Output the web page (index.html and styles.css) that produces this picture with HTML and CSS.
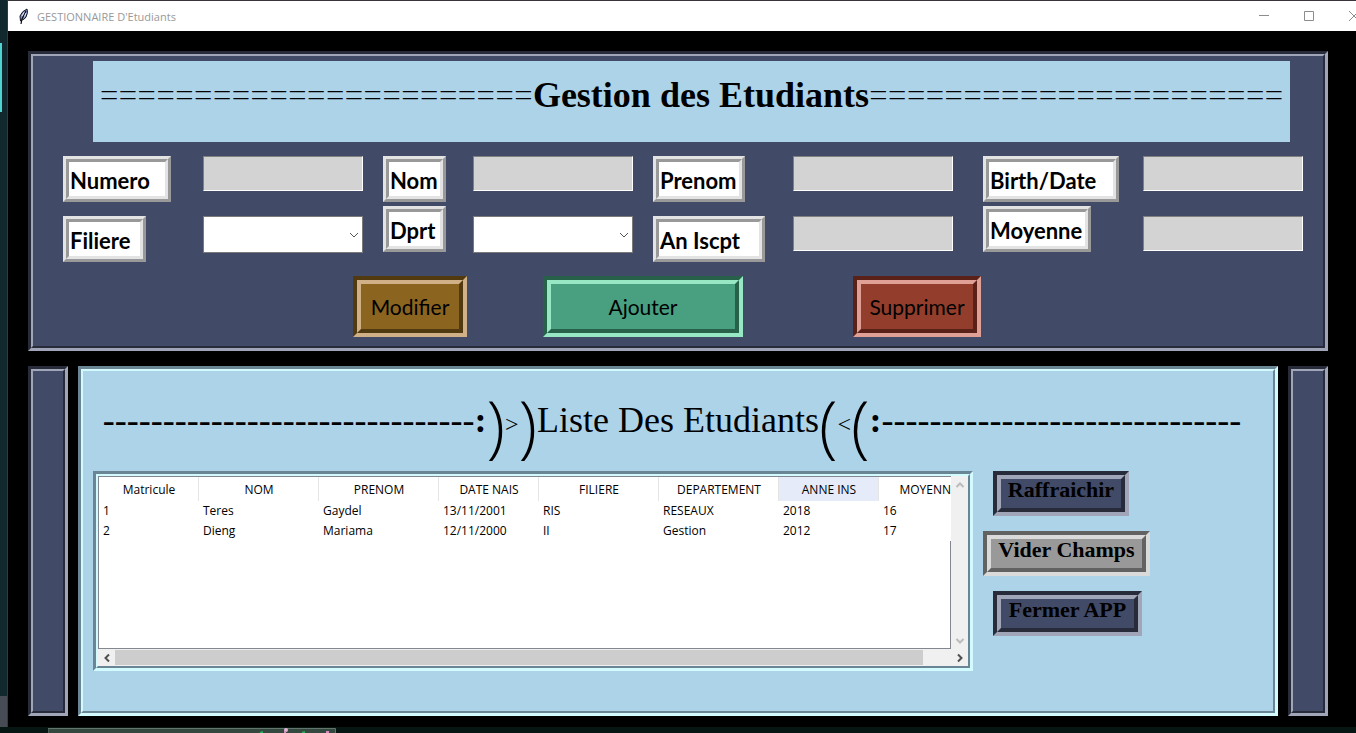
FILE: index.html
```html
<!DOCTYPE html>
<html lang="fr">
<head>
<meta charset="utf-8">
<title>GESTIONNAIRE D'Etudiants</title>
<link rel="stylesheet" href="styles.css">
</head>
<body>
<div class="desktop">
  <aside class="desktop-edge"><span class="edge-accent"></span><span class="edge-foot"></span></aside>
  <div class="window">
    <header class="titlebar">
      <svg class="feather" width="12" height="17" viewBox="0 0 12 17">
        <path d="M2.500 13 L2 8 Q4 3 9 1 Q10.500 4 8 9 Q6.500 11.500 4 12 Z" fill="#8896c6" stroke="#10131f"/>
        <path d="M3 16 L4 11 L8 3" fill="none" stroke="#0b0d16" stroke-width="1.200"/>
        <path d="M4 8 L6 4.500M6.500 8.500L8 5" stroke="#e6ebff" stroke-width="1"/>
      </svg>
      <span class="titlebar-text">GESTIONNAIRE D'Etudiants</span>
      <div class="controls">
        <button aria-label="Réduire"><svg width="12" height="12" viewBox="0 0 12 12"><path d="M1 5.500H11"/></svg></button>
        <button aria-label="Agrandir"><svg width="12" height="12" viewBox="0 0 12 12"><path d="M1.500 1.500H10.500V10.500H1.500Z"/></svg></button>
        <button aria-label="Fermer"><svg width="12" height="12" viewBox="0 0 12 12"><path d="M1 1L11 11M11 1L1 11"/></svg></button>
      </div>
    </header>

    <main class="content">
      <section class="bevel panel form-panel">
        <h1 class="banner"><span class="rule">=======================</span>Gestion des Etudiants<span class="rule">======================</span></h1>

        <form class="fields" id="student">
          <label class="bevel tag w-wide" for="numero">Numero</label>
          <input class="entry" id="numero">
          <label class="bevel tag w-nom" for="nom">Nom</label>
          <input class="entry" id="nom">
          <label class="bevel tag w-prenom" for="prenom">Prenom</label>
          <input class="entry" id="prenom">
          <label class="bevel tag w-birth" for="birth">Birth/Date</label>
          <input class="entry" id="birth">

          <label class="bevel tag w-filiere low" for="filiere">Filiere</label>
          <div class="combo low"><select id="filiere"><option></option><option>RIS</option><option>II</option></select><svg width="10" height="6" viewBox="0 0 10 6"><path d="M1 1L5 5L9 1"/></svg></div>
          <label class="bevel tag w-nom" for="dprt">Dprt</label>
          <div class="combo low"><select id="dprt"><option></option><option>RESEAUX</option><option>Gestion</option></select><svg width="10" height="6" viewBox="0 0 10 6"><path d="M1 1L5 5L9 1"/></svg></div>
          <label class="bevel tag w-annee low" for="annee">An Iscpt</label>
          <input class="entry low" id="annee">
          <label class="bevel tag w-wide" for="moyenne">Moyenne</label>
          <input class="entry low" id="moyenne">
        </form>

        <div class="actions">
          <button class="bevel action edit">Modifier</button>
          <button class="bevel action add">Ajouter</button>
          <button class="bevel action remove">Supprimer</button>
        </div>
      </section>

      <div class="lower">
        <div class="bevel panel side"></div>
        <section class="bevel panel list-panel">
          <h2 class="list-title">-------------------------------<b>:</b><span class="paren">)</span><span class="chev">&gt;</span><span class="paren">)</span>Liste Des Etudiants<span class="paren">(</span><span class="chev">&lt;</span><span class="paren">(</span><b>:</b>------------------------------</h2>
          <div class="list-body">
            <div class="bevel table-frame">
              <div class="viewport">
                <table>
                  <colgroup><col class="c-short"><col class="c-long"><col class="c-long"><col class="c-short"><col class="c-long"><col class="c-long"><col class="c-short"><col></colgroup>
                  <thead><tr><th>Matricule</th><th>NOM</th><th>PRENOM</th><th>DATE NAIS</th><th>FILIERE</th><th>DEPARTEMENT</th><th class="hover">ANNE INS</th><th class="last">MOYENN</th></tr></thead>
                  <tbody>
                    <tr><td>1</td><td>Teres</td><td>Gaydel</td><td>13/11/2001</td><td>RIS</td><td>RESEAUX</td><td>2018</td><td>16</td></tr>
                    <tr><td>2</td><td>Dieng</td><td>Mariama</td><td>12/11/2000</td><td>II</td><td>Gestion</td><td>2012</td><td>17</td></tr>
                  </tbody>
                </table>
                <div class="blank"></div>
              </div>
              <div class="scroll-v">
                <button aria-label="Haut"><svg width="10" height="8" viewBox="0 0 10 8"><path d="M1.500 6L5 2.500L8.500 6"/></svg></button>
                <button aria-label="Bas"><svg width="10" height="8" viewBox="0 0 10 8"><path d="M1.500 2L5 5.500L8.500 2"/></svg></button>
              </div>
              <div class="scroll-h">
                <button aria-label="Gauche"><svg width="8" height="10" viewBox="0 0 8 10"><path d="M6 1.500L2.500 5L6 8.500"/></svg></button>
                <div class="track"><div class="thumb"></div></div>
                <button aria-label="Droite"><svg width="8" height="10" viewBox="0 0 8 10"><path d="M2 1.500L5.500 5L2 8.500"/></svg></button>
              </div>
            </div>
            <div class="tools">
              <button class="bevel tool inset w-refresh">Raffraichir</button>
              <button class="bevel tool gray w-clear">Vider Champs</button>
              <button class="bevel tool inset w-close">Fermer APP</button>
            </div>
          </div>
        </section>
        <div class="bevel panel side"></div>
      </div>
    </main>
  </div>
</div>
<footer class="desktop-foot">
  <svg class="preview" width="288" height="6" viewBox="0 0 288 6">
    <path d="M0 6V1.500H287.500V6" fill="#34483f" stroke="#62756c"/>
    <path d="M212 6L215 5M254 6L257 5" stroke="#22b45b" stroke-width="2"/>
    <circle cx="238" cy="3" r="2" fill="#e5b1d4"/><path d="M237 4V6M278 5H281" stroke="#d58cbd" stroke-width="2"/>
  </svg>
</footer>
</body>
</html>
```
FILE: styles.css
```css
* { box-sizing: border-box; }

body {
  margin: 0;
  min-height: 100vh;
  display: flex;
  flex-direction: column;
  background: #061713;
  color: #000;
  font-family: "Segoe UI", "Open Sans", sans-serif;
  font-size: 12px;
  overflow: hidden;
}

button, input, select { font: inherit; color: inherit; border-radius: 0; margin: 0; }

.desktop { flex: 1; display: flex; }

.desktop-edge {
  width: 8px;
  display: flex;
  flex-direction: column;
  justify-content: space-between;
  padding-top: 43px;
  background: #12282f;
  border-right: 1px solid #343a3f;
}
.edge-accent { width: 2px; height: 69px; background: #4fd5d0; }
.edge-foot { height: 31px; background: #474b54; }

.window {
  flex: 1;
  min-width: 0;
  display: flex;
  flex-direction: column;
  background: #000;
  border-top: 1px solid #39343a;
}

.titlebar {
  height: 30px;
  display: flex;
  align-items: center;
  padding-left: 10px;
  background: #fff;
  color: #999;
  font-size: 11px;
  overflow: hidden;
}
.titlebar-text { margin-left: 7px; }
.controls { margin-left: auto; margin-right: -20px; display: flex; }
.controls button {
  width: 45px;
  height: 30px;
  padding: 0;
  border: 0;
  background: none;
  display: grid;
  place-items: center;
}
.controls svg { fill: none; stroke: #8c8c8c; }

.content {
  flex: 1;
  display: flex;
  flex-direction: column;
  gap: 15px;
  padding: 20px 28px 11px 20px;
}

/* Two-step frame: an outer border and an inner one with the colours swapped. */
.bevel {
  --first: #272b3a;
  --second: #a0a6b8;
  --outer: 3px;
  --inner: 2px;
  position: relative;
  border: var(--outer) solid;
  border-color: var(--first) var(--second) var(--second) var(--first);
}
.bevel::before {
  content: "";
  position: absolute;
  inset: 0;
  border: var(--inner) solid;
  border-color: var(--second) var(--first) var(--first) var(--second);
  pointer-events: none;
}

.panel { background: #414a66; padding: 2px; }

.form-panel { padding-bottom: 11px; }

.banner {
  height: 81px;
  margin: 5px 33px 0 60px;
  padding-top: 13px;
  background: #add3e9;
  font-family: "Liberation Serif", serif;
  font-size: 36px;
  line-height: 42px;
  text-align: center;
  white-space: nowrap;
}
.rule { font-family: "Open Sans", sans-serif; font-size: 33px; line-height: 0; font-weight: 300; }

.fields {
  display: grid;
  grid-template-columns: 140fr 180fr 90fr 180fr 140fr 190fr 160fr 160fr;
  row-gap: 4px;
  align-items: start;
  margin: 14px 20px 0 30px;
}
.low { margin-top: 10px; }

.tag {
  --first: #e3e3e3;
  --second: #999;
  --inner: 3px;
  height: 46px;
  padding: 4px 0 0 4px;
  background: #fff;
  font-family: "Comic Sans MS", Lato, sans-serif;
  font-size: 22px;
  line-height: 36px;
  font-weight: 700;
  white-space: nowrap;
}
.w-wide { width: 108px; }
.w-nom { width: 63px; }
.w-prenom { width: 92px; }
.w-birth { width: 136px; }
.w-filiere { width: 83px; }
.w-annee { width: 112px; }

.entry {
  width: 160px;
  height: 35px;
  padding: 0 4px;
  background: #d3d3d3;
  border: 1px solid;
  border-color: #808080 #fff #fff #808080;
}
.tag.low, .entry.low { margin-top: 10px; }

.combo { position: relative; width: 160px; height: 37px; }
.combo select {
  appearance: none;
  width: 100%;
  height: 100%;
  padding: 0 20px 0 4px;
  background: #fff;
  border: 1px solid #7a7a7a;
}
.combo svg {
  position: absolute;
  right: 4px;
  top: 16px;
  fill: none;
  stroke: #555;
  pointer-events: none;
}

.actions {
  display: grid;
  grid-template-columns: 190fr 310fr 470fr;
  margin: 14px 0 0 320px;
}
.action {
  --outer: 4px;
  --inner: 4px;
  height: 61px;
  padding: 0;
  font-family: "Comic Sans MS", Lato, sans-serif;
  font-size: 21px;
}
.edit { --first: #523a10; --second: #d0b087; width: 114px; background: #8b6520; }
.add { --first: #28614a; --second: #97e6c4; width: 200px; background: #48a080; }
.remove { --first: #5a2118; --second: #e0a096; width: 128px; background: #933e2c; }

.lower { flex: 1; display: flex; gap: 10px; }
.side { width: 40px; }

.list-panel {
  --first: #6a8594;
  --second: #d3fbff;
  flex: 1;
  min-width: 0;
  background: #add3e9;
}

.list-title {
  height: 100px;
  margin: 0 12px 0 0;
  padding-top: 28px;
  font-family: "Liberation Serif", serif;
  font-size: 36px;
  line-height: 42px;
  font-weight: 400;
  text-align: center;
  white-space: nowrap;
}
.paren {
  font-family: "Open Sans", sans-serif;
  font-size: 68px;
  line-height: 0;
  font-weight: 300;
  vertical-align: -18px;
}
.chev { font-size: 24px; }

.list-body {
  display: grid;
  grid-template-columns: 880fr 290fr;
  gap: 10px;
  align-items: start;
  padding-left: 10px;
}

.table-frame {
  --first: #6a8594;
  --second: #d3fbff;
  display: grid;
  grid-template-columns: minmax(0, 1fr) 17px;
  grid-template-rows: 173px 17px;
  padding: 2px;
  background: #f0f0f0;
}

.viewport {
  display: flex;
  flex-direction: column;
  border: 1px solid #828790;
  border-right: 0;
  background: #fff;
}
.blank { flex: 1; border-right: 1px solid #828790; }

table { width: 100%; table-layout: fixed; border-collapse: collapse; }
.c-short { width: 100px; }
.c-long { width: 120px; }
th { height: 24px; padding: 0; font-weight: 400; box-shadow: inset -1px 0 #e5e5e5; }
th.hover { background: #e5ebf8; }
th.last { text-align: right; box-shadow: none; }
td { height: 20px; padding: 0 4px; line-height: 16px; }

.scroll-v { display: flex; flex-direction: column; justify-content: space-between; }
.scroll-v svg, .scroll-h svg { fill: none; stroke: #bbb; stroke-width: 2; }
.scroll-v button, .scroll-h button {
  width: 17px;
  height: 17px;
  padding: 0;
  border: 0;
  background: none;
  display: grid;
  place-items: center;
}
.scroll-h { grid-column: 1 / -1; display: flex; }
.scroll-h svg { stroke: #505050; }
.track { flex: 1; padding: 1px 0; }
.thumb { width: 808px; max-width: 97%; height: 15px; background: #cdcdcd; }

.tools { display: flex; flex-direction: column; align-items: flex-start; gap: 15px; }
.tool {
  --outer: 4px;
  --inner: 4px;
  height: 45px;
  padding: 4px 8px 12px;
  background: #414a66;
  font-family: "Liberation Serif", serif;
  font-size: 22px;
  line-height: 21px;
  font-weight: 700;
  white-space: nowrap;
}
.tool.inset { margin-left: 10px; }
.gray { --first: #626262; --second: #dadada; background: #999; }
.w-refresh { width: 136px; }
.w-clear { width: 167px; }
.w-close { width: 149px; }

.desktop-foot { height: 6px; padding-left: 48px; }
.preview { display: block; }
```
